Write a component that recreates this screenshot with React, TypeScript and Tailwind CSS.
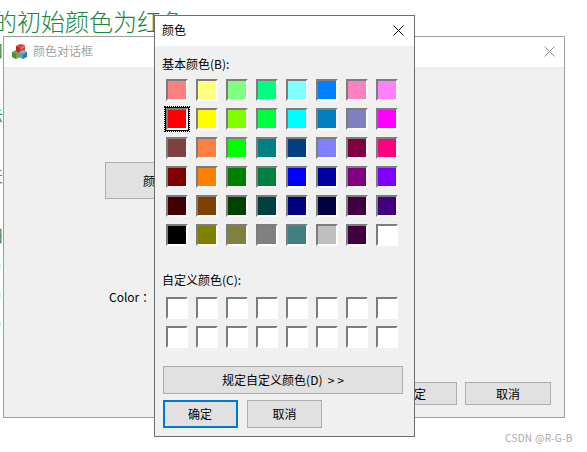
import React from 'react';

const FONT = '"Noto Sans CJK SC", "Noto Sans", sans-serif';

const BASIC_COLORS = [
  '#ff8080', '#ffff80', '#80ff80', '#00ff80', '#80ffff', '#0080ff', '#ff80c0', '#ff80ff',
  '#ff0000', '#ffff00', '#80ff00', '#00ff40', '#00ffff', '#0080c0', '#8080c0', '#ff00ff',
  '#804040', '#ff8040', '#00ff00', '#008080', '#004080', '#8080ff', '#800040', '#ff0080',
  '#800000', '#ff8000', '#008000', '#008040', '#0000ff', '#0000a0', '#800080', '#8000ff',
  '#400000', '#804000', '#004000', '#004040', '#000080', '#000040', '#400040', '#400080',
  '#000000', '#808000', '#808040', '#808080', '#408080', '#c0c0c0', '#400040', '#ffffff',
];

const Swatch: React.FC<{ color: string; selected?: boolean }> = ({ color, selected }) => (
  <div
    className={
      'w-[22px] h-[22px] border-2 border-t-[#7d7d7d] border-l-[#7d7d7d] border-r-white border-b-white ' +
      (selected ? 'shadow-[0_0_0_1px_#000] outline outline-1 outline-dotted outline-black outline-offset-1' : '')
    }
    style={{ backgroundColor: color }}
  />
);

const CubesIcon = () => (
  <svg width="17" height="17" viewBox="0 0 17 17">
    <polygon points="1,9 5,7 9,9 9,14 5,16 1,14" fill="#6aa84f" />
    <polygon points="1,9 5,11 5,16 1,14" fill="#4f8f35" />
    <polygon points="5,3 9,1 14,2 14,8 9,10 5,8" fill="#d9432f" />
    <polygon points="5,3 9,5 9,10 5,8" fill="#b8301f" />
    <polygon points="9,5 14,2 14,4 10,6" fill="#ee7a63" />
    <polygon points="8,9 12,7 16,9 16,14 12,16 8,14" fill="#2f78b7" />
    <polygon points="8,9 12,11 12,16 8,14" fill="#5b9bd0" />
    <polygon points="8,9 12,7 16,9 12,11" fill="#7fb5dd" />
  </svg>
);

const CloseIcon: React.FC<{ color: string }> = ({ color }) => (
  <svg width="11" height="11" viewBox="0 0 11 11">
    <path d="M0.5 0.5 L10.5 10.5 M10.5 0.5 L0.5 10.5" stroke={color} strokeWidth="1" fill="none" />
  </svg>
);

const App: React.FC = () => {
  return (
    <div
      className="relative w-[587px] h-[452px] overflow-hidden bg-white text-[12px] text-black"
      style={{ fontFamily: FONT }}
    >
      {/* page text behind the windows */}
      <div className="absolute left-[-7px] top-[4px] text-[24px] leading-[34px] font-light whitespace-nowrap text-[#16893a]">
        的初始颜色为红色
      </div>
      <div className="absolute left-[-12px] top-[40px] text-[16px] leading-[20px] text-[#2f8f4f]">日</div>
      <div className="absolute left-[-13px] top-[105px] text-[16px] leading-[20px] text-[#2f8f4f]">示</div>
      <div className="absolute left-[-13px] top-[165px] text-[16px] leading-[20px] text-[#6f8f3f]">天</div>
      <div className="absolute left-[-12px] top-[225px] text-[16px] leading-[20px] text-[#1f8f5f]">日</div>
      <div className="absolute left-[-4px] top-[252px] text-[16px] leading-[24px] text-[#333]">)</div>
      <div className="absolute left-[-4px] top-[281px] text-[16px] leading-[24px] text-[#333]">)</div>
      <div className="absolute left-[-4px] top-[310px] text-[16px] leading-[24px] text-[#333]">)</div>

      {/* main window */}
      <div className="absolute left-[3px] top-[36px] w-[562px] h-[382px] border border-[#9e9e9e] bg-[#f0f0f0] flex flex-col">
        <div className="h-[30px] bg-white flex items-center pl-[7px] pr-[9px] pb-[2px] shrink-0">
          <CubesIcon />
          <span className="ml-[5px] text-[#a3a3a3]">颜色对话框</span>
          <span className="ml-auto flex">
            <CloseIcon color="#8f8f8f" />
          </span>
        </div>
        <div className="flex-1 flex flex-col pl-[101px] pr-[13px] pb-[12px]">
          <button className="mt-[95px] w-[100px] h-[37px] border border-[#adadad] bg-[#e1e1e1]">颜色</button>
          <div className="mt-[90px] ml-[4px] leading-[16px]">Color ：</div>
          <div className="mt-auto flex justify-end gap-[8px]">
            <button className="w-[86px] h-[23px] border border-[#adadad] bg-[#e1e1e1]">确定</button>
            <button className="w-[86px] h-[23px] border border-[#adadad] bg-[#e1e1e1]">取消</button>
          </div>
        </div>
      </div>

      {/* color dialog */}
      <div className="absolute left-[154px] top-[15px] w-[261px] h-[422px] border border-[#6e6e6e] bg-[#f0f0f0] flex flex-col">
        <div className="h-[30px] bg-white flex items-center pl-[7px] pr-[10px] pb-[2px] shrink-0">
          <span>颜色</span>
          <span className="ml-auto flex">
            <CloseIcon color="#000" />
          </span>
        </div>
        <div className="pl-[8px] pt-[10px]">
          <div className="h-[16px] leading-[16px] ml-[-1px]">基本颜色(B):</div>
          <div className="mt-[7px] ml-[3px] grid grid-cols-[repeat(8,22px)] gap-x-[8px] gap-y-[7px]">
            {BASIC_COLORS.map((c, i) => (
              <Swatch key={i} color={c} selected={i === 8} />
            ))}
          </div>
          <div className="mt-[26px] h-[16px] leading-[16px] ml-[-1px]">自定义颜色(C):</div>
          <div className="mt-[9px] ml-[3px] grid grid-cols-[repeat(8,22px)] gap-x-[8px] gap-y-[7px]">
            {Array.from({ length: 16 }).map((_, i) => (
              <Swatch key={i} color="#ffffff" />
            ))}
          </div>
          <button className="mt-[18px] w-[240px] h-[28px] border border-[#adadad] bg-[#e1e1e1] whitespace-pre">
            规定自定义颜色(D)  &gt; &gt;
          </button>
          <div className="mt-[6px] flex gap-[9px]">
            <button className="w-[75px] h-[28px] border-2 border-[#0078d7] bg-[#e1e1e1] pr-[1px]">确定</button>
            <button className="w-[75px] h-[28px] border border-[#adadad] bg-[#e1e1e1]">取消</button>
          </div>
        </div>
      </div>

      <div className="absolute left-[505px] top-[431px] text-[10px] leading-[14px] tracking-[0.3px] text-[#a8a8a8] whitespace-nowrap">
        CSDN @R-G-B
      </div>
    </div>
  );
};

export default App;
